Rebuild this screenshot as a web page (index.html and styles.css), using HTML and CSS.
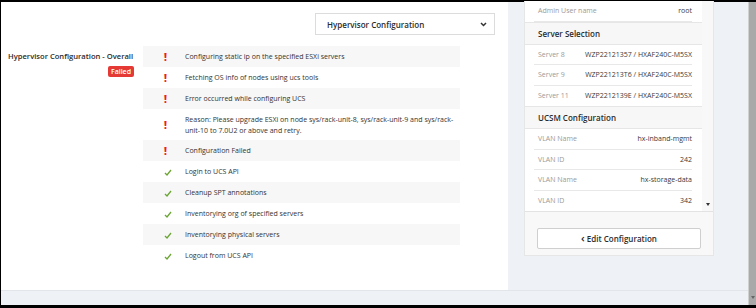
FILE: index.html
```html
<!DOCTYPE html>
<html lang="en">

<head>
    <meta charset="UTF-8" />
    <title>Hypervisor Configuration</title>
    <link rel="stylesheet" href="styles.css">
</head>

<body>
    <div class="frame">
        <div class="screen">
            <div class="workspace">
                <div class="panel">
                    <div class="panel-top">
                        <div class="select">
                            <span>Hypervisor Configuration</span>
                            <svg width="7" height="5" viewBox="0 0 7 5"><path d="M1 1l2.5 2.5L6 1" fill="none" stroke="#333" stroke-width="1.5"/></svg>
                        </div>
                    </div>
                    <div class="panel-body">
                        <div class="overall">
                            <div class="overall-title">Hypervisor Configuration - Overall</div>
                            <span class="badge">Failed</span>
                        </div>
                        <ul class="steps">
                            <li class="step err"><span class="icon">!</span><span>Configuring static ip on the specified ESXi servers</span></li>
                            <li class="step err"><span class="icon">!</span><span>Fetching OS info of nodes using ucs tools</span></li>
                            <li class="step err"><span class="icon">!</span><span>Error occurred while configuring UCS</span></li>
                            <li class="step err tall"><span class="icon">!</span><span>Reason: Please upgrade ESXi on node sys/rack-unit-8, sys/rack-unit-9 and sys/rack-unit-10 to 7.0U2 or above and retry.</span></li>
                            <li class="step err"><span class="icon">!</span><span>Configuration Failed</span></li>
                            <li class="step ok"><span class="icon"><svg width="8" height="7" viewBox="0 0 8 7"><path d="M1 4l2 2 4-5" fill="none" stroke="#6aa532" stroke-width="1.3"/></svg></span><span>Login to UCS API</span></li>
                            <li class="step ok"><span class="icon"><svg width="8" height="7" viewBox="0 0 8 7"><path d="M1 4l2 2 4-5" fill="none" stroke="#6aa532" stroke-width="1.3"/></svg></span><span>Cleanup SPT annotations</span></li>
                            <li class="step ok"><span class="icon"><svg width="8" height="7" viewBox="0 0 8 7"><path d="M1 4l2 2 4-5" fill="none" stroke="#6aa532" stroke-width="1.3"/></svg></span><span>Inventorying org of specified servers</span></li>
                            <li class="step ok"><span class="icon"><svg width="8" height="7" viewBox="0 0 8 7"><path d="M1 4l2 2 4-5" fill="none" stroke="#6aa532" stroke-width="1.3"/></svg></span><span>Inventorying physical servers</span></li>
                            <li class="step ok"><span class="icon"><svg width="8" height="7" viewBox="0 0 8 7"><path d="M1 4l2 2 4-5" fill="none" stroke="#6aa532" stroke-width="1.3"/></svg></span><span>Logout from UCS API</span></li>
                        </ul>
                    </div>
                </div>
                <div class="side">
                    <div class="summary">
                        <div class="summary-scroll">
                            <div class="summary-list">
                                <div class="row"><span class="label">Admin User name</span><span>root</span></div>
                                <div class="section">Server Selection</div>
                                <div class="row"><span class="label">Server 8</span><span>WZP22121357 / HXAF240C-M5SX</span></div>
                                <div class="row"><span class="label">Server 9</span><span>WZP221213T6 / HXAF240C-M5SX</span></div>
                                <div class="row last"><span class="label">Server 11</span><span>WZP2212139E / HXAF240C-M5SX</span></div>
                                <div class="section">UCSM Configuration</div>
                                <div class="row"><span class="label">VLAN Name</span><span>hx-inband-mgmt</span></div>
                                <div class="row"><span class="label">VLAN ID</span><span>242</span></div>
                                <div class="row"><span class="label">VLAN Name</span><span>hx-storage-data</span></div>
                                <div class="row last"><span class="label">VLAN ID</span><span>342</span></div>
                            </div>
                            <div class="mini-scroll"><span class="arrow"></span></div>
                        </div>
                        <div class="summary-foot">
                            <button class="btn"><span class="chev">&lsaquo;</span> Edit Configuration</button>
                        </div>
                    </div>
                </div>
            </div>
            <div class="strip"></div>
        </div>
        <div class="scrollbar"><span class="arrow"></span></div>
    </div>
</body>

</html>
```

FILE: styles.css
```css
* {
    box-sizing: border-box;
}

body {
    margin: 0;
    font-family: "Open Sans", "Noto Sans", sans-serif;
    color: #333;
    background: #000;
}

.frame {
    width: 756px;
    height: 308px;
    display: flex;
    border-top: 2px solid #000;
    border-left: 1px solid #000;
    border-bottom: 3px solid #000;
    background: #eef1f6;
}

.screen {
    flex: 1;
    display: flex;
    flex-direction: column;
}

.workspace {
    flex: 1;
    display: flex;
}

.strip {
    height: 15px;
    border-top: 1px solid #e2e5ea;
}

.panel {
    width: 507px;
    background: #fff;
    display: flex;
    flex-direction: column;
}

.panel-top {
    display: flex;
    justify-content: flex-end;
    padding: 11px 13px 0 0;
    height: 43px;
}

.select {
    width: 180px;
    height: 22px;
    border: 1px solid #dcdcdc;
    display: flex;
    align-items: center;
    justify-content: space-between;
    padding: 0 7px 0 11px;
    font-size: 8px;
    font-weight: 600;
    color: #2b2b2b;
}

.panel-body {
    display: flex;
    padding-top: 1px;
}

.overall {
    width: 142px;
    padding: 5px 0 0 7px;
    display: flex;
    flex-direction: column;
    align-items: flex-end;
}

.overall-title {
    font-size: 7.6px;
    font-weight: 600;
    color: #2b2b2b;
    align-self: flex-start;
    white-space: nowrap;
}

.badge {
    margin-top: 5px;
    margin-right: 9px;
    background: #e53935;
    color: #fff;
    font-size: 7px;
    font-weight: 600;
    padding: 1px 3px;
    border-radius: 2px;
}

.steps {
    list-style: none;
    margin: 0;
    padding: 0;
    width: 317px;
}

.step {
    display: flex;
    align-items: center;
    height: 21px;
    font-size: 7px;
    color: #333;
}

.step:nth-child(odd) {
    background: #f7f7f7;
}

.step.tall {
    height: 31px;
    line-height: 11px;
}

.icon {
    width: 42px;
    flex: none;
    padding-left: 21px;
    font-weight: 800;
    font-size: 10px;
    line-height: 10px;
}

.err .icon {
    color: #ee1c1c;
}

.side {
    flex: 1;
    padding-left: 16px;
}

.summary {
    width: 190px;
    height: 255px;
    margin-top: -1px;
    background: #f8f8f8;
    border: 1px solid #e6e6e6;
    border-top: 0;
    display: flex;
    flex-direction: column;
}

.summary-scroll {
    height: 211px;
    display: flex;
    background: #fff;
    border-bottom: 1px solid #e3e3e3;
}

.summary-list {
    flex: 1;
    font-size: 7px;
}

.row {
    display: flex;
    justify-content: space-between;
    align-items: center;
    height: 20.5px;
    margin: 0 10px 0 9px;
    padding: 0 0 0 4px;
    border-bottom: 1px solid #e8e8e8;
    color: #3a3a3a;
}

.row.last {
    border-bottom: 0;
}

.label {
    color: #9a9a9a;
}

.section {
    height: 23px;
    display: flex;
    align-items: center;
    padding-left: 13px;
    background: #f7f7f7;
    border-bottom: 1px solid #e6e6e6;
    border-top: 1px solid #e6e6e6;
    font-size: 8px;
    font-weight: 600;
    color: #2b2b2b;
}

.mini-scroll {
    width: 11px;
    background: #f8f8f8;
    display: flex;
    align-items: flex-end;
    justify-content: center;
    padding-bottom: 5px;
}

.arrow {
    width: 0;
    height: 0;
    border-left: 2.5px solid transparent;
    border-right: 2.5px solid transparent;
    border-top: 3px solid #333;
}

.summary-foot {
    flex: 1;
    padding: 13px 12px 0;
}

.btn {
    width: 100%;
    height: 21px;
    background: #fff;
    border: 1px solid #cfcfcf;
    border-radius: 2px;
    font-family: inherit;
    font-size: 8px;
    font-weight: 600;
    color: #2b2b2b;
}

.chev {
    font-size: 11px;
    line-height: 8px;
}

.scrollbar {
    width: 8px;
    background: #a9a9a9;
    border-left: 1px solid #d0d0d0;
    display: flex;
    align-items: flex-end;
    justify-content: center;
    padding-bottom: 6px;
}

.scrollbar .arrow {
    border-top-color: #666;
}
```
